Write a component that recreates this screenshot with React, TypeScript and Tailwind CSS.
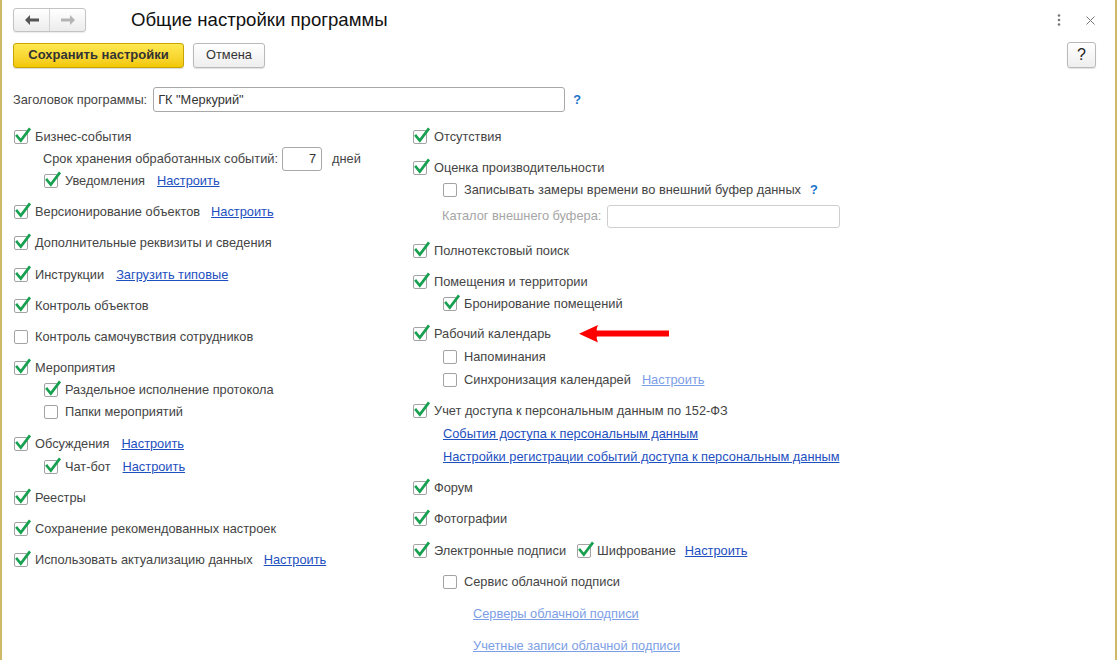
import React from "react";

function Box({ checked }: { checked?: boolean }) {
  return (
    <span className="relative inline-block w-[14px] h-[14px] shrink-0 border border-[#a3a3a3] rounded-[2px] bg-white">
      {checked && (
        <svg
          className="absolute left-[-1px] top-[-1px] overflow-visible"
          width="14"
          height="14"
          viewBox="0 0 14 14"
        >
          <path
            d="M3 6 L6.8 10.6 L15.2 -0.6"
            fill="none"
            stroke="#17a04f"
            strokeWidth="2.7"
            strokeLinecap="square"
            strokeLinejoin="miter"
          />
        </svg>
      )}
    </span>
  );
}

function Link({ children, dim }: { children: React.ReactNode; dim?: boolean }) {
  return (
    <span className={dim ? "underline text-[#7c9ee6] decoration-[#7c9ee6]" : "underline text-[#1d4fbf] decoration-[#1d4fbf]"}>
      {children}
    </span>
  );
}

function Item({
  checked,
  text,
  indent,
  h,
  children,
}: {
  checked?: boolean;
  text: string;
  indent?: boolean;
  h?: string;
  children?: React.ReactNode;
}) {
  return (
    <div className={`flex items-center ${h ?? "h-[22px]"} ${indent ? "pl-[31px]" : "pl-[1px]"}`}>
      <Box checked={checked} />
      <span className="ml-[7px] whitespace-nowrap">{text}</span>
      {children}
    </div>
  );
}

export default function App() {
  return (
    <div className="w-[1117px] h-[660px] overflow-hidden bg-white border-l-[2px] border-r-[2px] border-[#cdb968] font-['Liberation_Sans',Arial,sans-serif] text-[12.8px] text-[#444] flex flex-col">
      {/* Title bar */}
      <div className="flex items-center h-[40px] pl-[11px] pr-[20px] shrink-0">
        <div className="flex h-[24px] w-[73px] border border-[#c3c3c3] rounded-[3px] bg-linear-to-b from-white to-[#ececec] shadow-[0_1px_1px_rgba(0,0,0,0.08)]">
          <div className="flex-1 flex items-center justify-center">
            <svg width="14" height="10" viewBox="0 0 14 10">
              <path d="M0 5 L5 0 L5 3.5 L14 3.5 L14 6.5 L5 6.5 L5 10 Z" fill="#555" />
            </svg>
          </div>
          <div className="w-px bg-[#d2d2d2]" />
          <div className="flex-1 flex items-center justify-center">
            <svg width="14" height="10" viewBox="0 0 14 10">
              <path d="M14 5 L9 0 L9 3.5 L0 3.5 L0 6.5 L9 6.5 L9 10 Z" fill="#b4b4b4" />
            </svg>
          </div>
        </div>
        <div className="ml-[45px] text-[18.6px] text-[#111] whitespace-nowrap">Общие настройки программы</div>
        <div className="ml-auto flex items-center">
          <svg width="4" height="12" viewBox="0 0 4 12">
            <circle cx="2" cy="1.5" r="1.3" fill="#777" />
            <circle cx="2" cy="6" r="1.3" fill="#777" />
            <circle cx="2" cy="10.5" r="1.3" fill="#777" />
          </svg>
          <svg className="ml-[25px]" width="9" height="9" viewBox="0 0 9 9">
            <path d="M0.5 0.5 L8.5 8.5 M8.5 0.5 L0.5 8.5" stroke="#777" strokeWidth="1" />
          </svg>
        </div>
      </div>

      {/* Toolbar */}
      <div className="flex items-center pl-[11px] pr-[19px] pt-[2px] shrink-0">
        <div className="flex items-center justify-center w-[171px] h-[25px] rounded-[3px] border border-[#c7a400] bg-linear-to-b from-[#ffe94f] to-[#f3c800] font-bold text-[13px] text-[#333] shadow-[0_1px_1px_rgba(0,0,0,0.15)] whitespace-nowrap">
          Сохранить настройки
        </div>
        <div className="ml-[9px] flex items-center justify-center w-[72px] h-[25px] rounded-[3px] border border-[#b9b9b9] bg-linear-to-b from-white to-[#eeeeee] text-[#333] shadow-[0_1px_1px_rgba(0,0,0,0.12)]">
          Отмена
        </div>
        <div className="ml-auto flex items-center justify-center w-[29px] h-[26px] rounded-[3px] border border-[#b9b9b9] bg-linear-to-b from-white to-[#eeeeee] text-[#222] text-[16px] shadow-[0_1px_1px_rgba(0,0,0,0.12)]">
          ?
        </div>
      </div>

      {/* Program title field */}
      <div className="flex items-center pl-[11px] mt-[19px] shrink-0">
        <span className="whitespace-nowrap">Заголовок программы:</span>
        <div className="ml-[6px] flex items-center w-[412px] h-[25px] border border-[#a8a8a8] rounded-[3px] px-[4px] text-[#333]">
          ГК "Меркурий"
        </div>
        <span className="ml-[8px] text-[#1a72c9] font-bold">?</span>
      </div>

      {/* Columns */}
      <div className="flex pl-[11px] mt-[14px]">
        {/* Left column */}
        <div className="w-[399px] shrink-0 flex flex-col gap-[9px]">
          <div className="flex flex-col">
            <Item checked text="Бизнес-события" />
            <div className="flex items-center h-[21px] pl-[30px]">
              <span className="whitespace-nowrap">Срок хранения обработанных событий:</span>
              <div className="ml-[4px] flex items-center justify-end w-[40px] h-[24px] border border-[#a8a8a8] rounded-[3px] pr-[5px] text-[#333]">
                7
              </div>
              <span className="ml-[10px]">дней</span>
            </div>
            <Item checked indent text="Уведомления" h="h-[23px]">
              <span className="ml-[12px]">
                <Link>Настроить</Link>
              </span>
            </Item>
          </div>
          <Item checked text="Версионирование объектов">
            <span className="ml-[11px]">
              <Link>Настроить</Link>
            </span>
          </Item>
          <Item checked text="Дополнительные реквизиты и сведения" />
          <div className="mt-[1px]">
            <Item checked text="Инструкции">
              <span className="ml-[12px]">
                <Link>Загрузить типовые</Link>
              </span>
            </Item>
          </div>
          <Item checked text="Контроль объектов" />
          <Item text="Контроль самочувствия сотрудников" />
          <div className="flex flex-col">
            <Item checked text="Мероприятия" />
            <Item checked indent text="Раздельное исполнение протокола" />
            <Item indent text="Папки мероприятий" />
          </div>
          <div className="flex flex-col mt-[1px]">
            <Item checked text="Обсуждения">
              <span className="ml-[12px]">
                <Link>Настроить</Link>
              </span>
            </Item>
            <Item checked indent text="Чат-бот" h="h-[23px]">
              <span className="ml-[12px]">
                <Link>Настроить</Link>
              </span>
            </Item>
          </div>
          <Item checked text="Реестры" />
          <Item checked text="Сохранение рекомендованных настроек" />
          <Item checked text="Использовать актуализацию данных">
            <span className="ml-[11px]">
              <Link>Настроить</Link>
            </span>
          </Item>
        </div>

        {/* Right column */}
        <div className="flex-1 flex flex-col gap-[9px]">
          <Item checked text="Отсутствия" />
          <div className="flex flex-col">
            <Item checked text="Оценка производительности" />
            <Item indent text="Записывать замеры времени во внешний буфер данных">
              <span className="ml-[9px] text-[#1a72c9] font-bold">?</span>
            </Item>
            <div className="flex items-center h-[30px] pl-[30px]">
              <span className="whitespace-nowrap text-[#a6a6a6]">Каталог внешнего буфера:</span>
              <div className="ml-[6px] w-[233px] h-[23px] border border-[#cfcfcf] rounded-[3px]" />
            </div>
          </div>
          <Item checked text="Полнотекстовый поиск" />
          <div className="flex flex-col">
            <Item checked text="Помещения и территории" />
            <Item checked indent text="Бронирование помещений" />
          </div>
          <div className="flex flex-col mt-[-1px]">
            <Item checked text="Рабочий календарь">
              <svg className="ml-[28px]" width="92" height="18" viewBox="0 0 92 18">
                <path d="M0 8.7 L19 0 Q17 5 18 5.6 L90 5.6 L90 11.6 L18 11.6 Q17 12.5 19 17.6 Z" fill="#ff0000" />
              </svg>
            </Item>
            <Item indent text="Напоминания" h="h-[23px]" />
            <Item indent text="Синхронизация календарей" h="h-[23px]">
              <span className="ml-[11px]">
                <Link dim>Настроить</Link>
              </span>
            </Item>
          </div>
          <div className="flex flex-col">
            <Item checked text="Учет доступа к персональным данным по 152-ФЗ" />
            <div className="flex items-center h-[24px] pl-[31px]">
              <Link>События доступа к персональным данным</Link>
            </div>
            <div className="flex items-center h-[22px] pl-[31px]">
              <Link>Настройки регистрации событий доступа к персональным данным</Link>
            </div>
          </div>
          <Item checked text="Форум" />
          <Item checked text="Фотографии" />
          <div className="mt-[1px]">
            <Item checked text="Электронные подписи">
              <span className="ml-[11px] flex items-center">
                <Box checked />
                <span className="ml-[6px] whitespace-nowrap">Шифрование</span>
                <span className="ml-[9px]">
                  <Link>Настроить</Link>
                </span>
              </span>
            </Item>
          </div>
          <Item indent text="Сервис облачной подписи" />
          <div className="flex items-center h-[23px] pl-[61px]">
            <Link dim>Серверы облачной подписи</Link>
          </div>
          <div className="flex items-center h-[23px] pl-[61px]">
            <Link dim>Учетные записи облачной подписи</Link>
          </div>
        </div>
      </div>
    </div>
  );
}
